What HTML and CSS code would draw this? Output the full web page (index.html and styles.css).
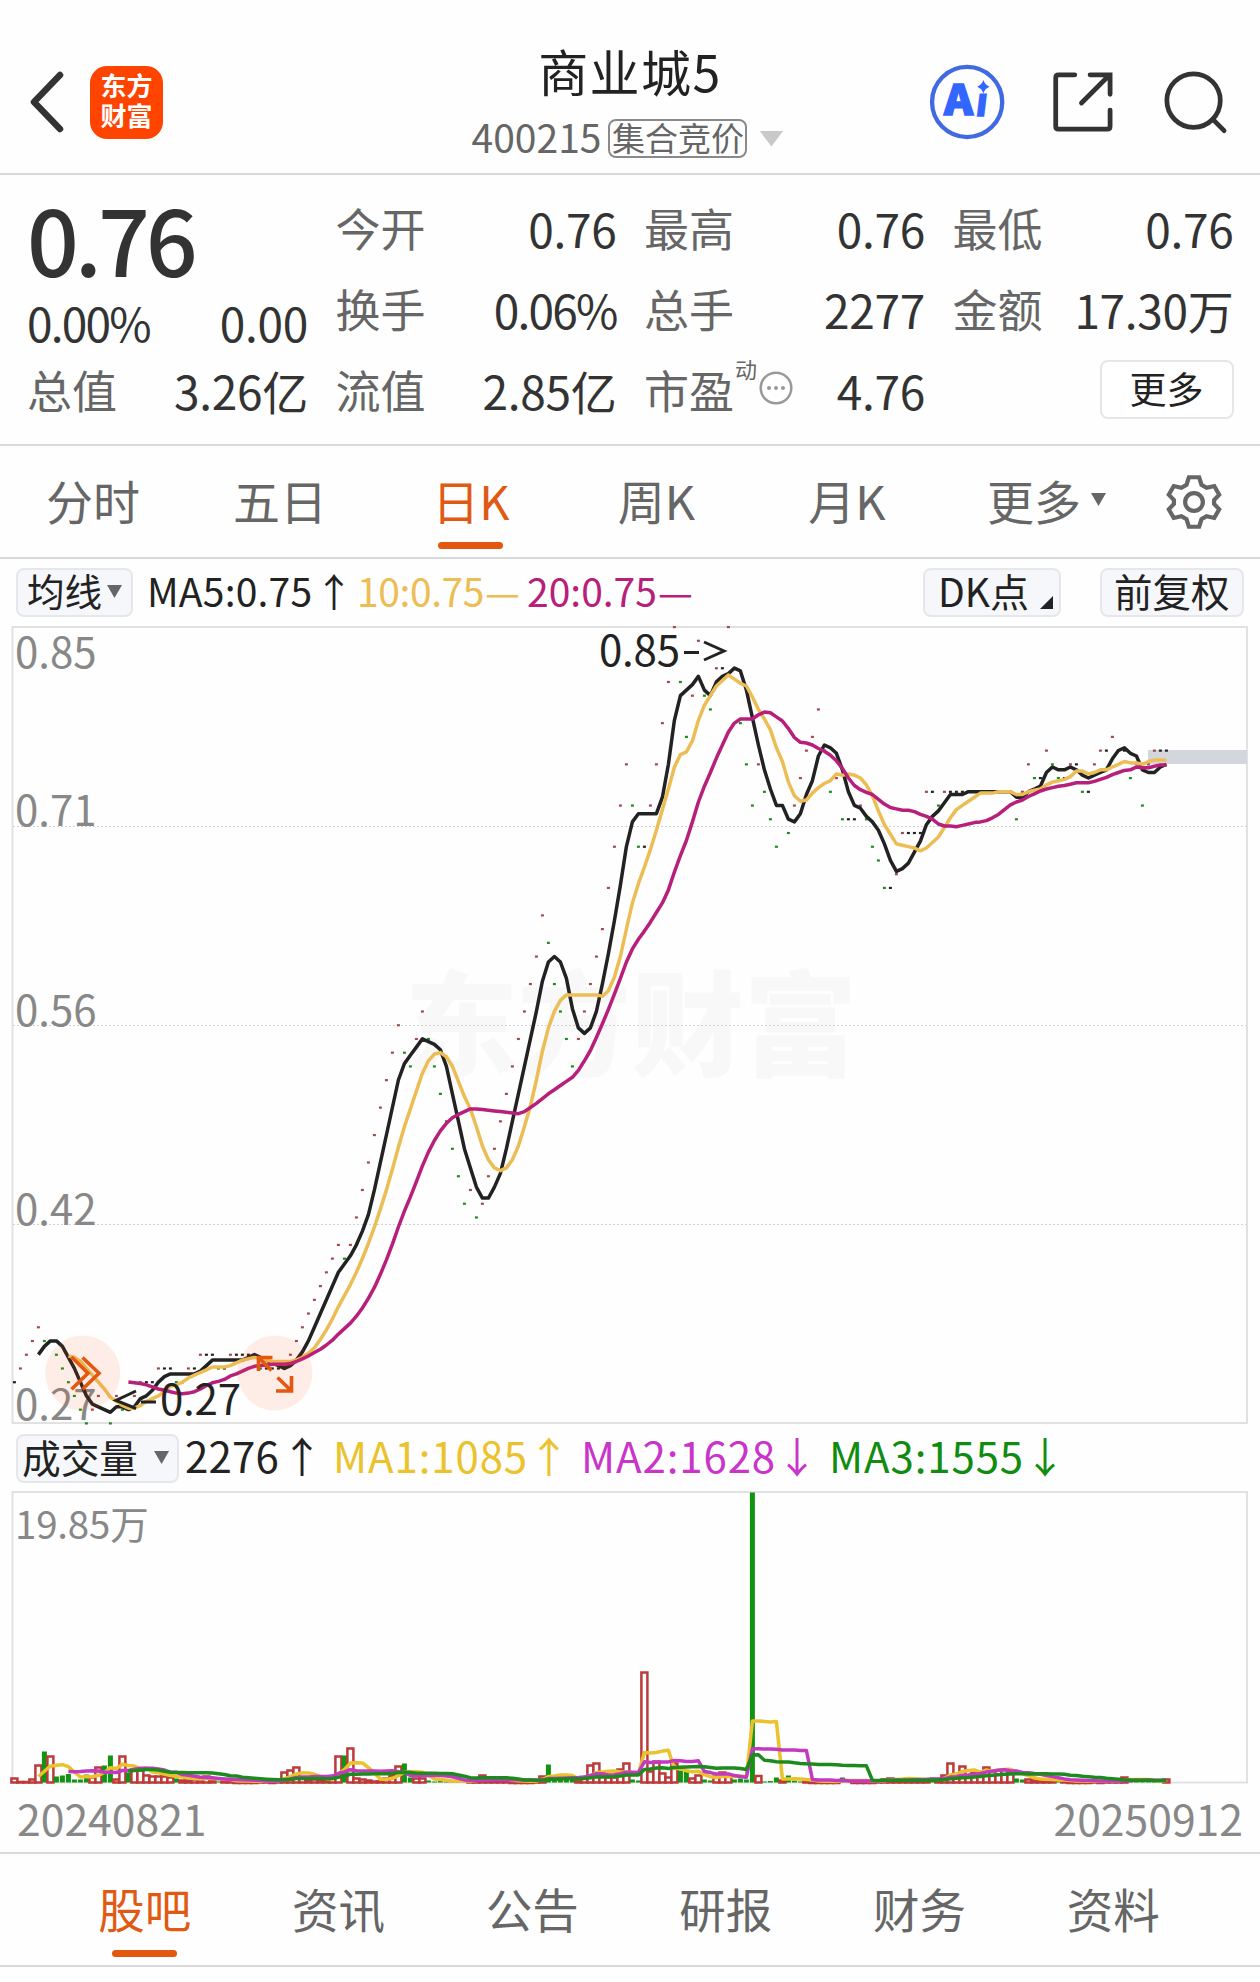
FILE: index.html
```
<!DOCTYPE html>
<html lang="zh-CN">
<head>
<meta charset="utf-8">
<title>商业城5 400215</title>
<link rel="stylesheet" href="styles.css">
</head>
<body>
<header class="topbar">
  <div class="topbar-left">
    <svg class="back" width="36" height="66" viewBox="0 0 36 66"><path d="M31 6 5 33 31 60"/></svg>
    <div class="logo"><span>东方</span><span>财富</span></div>
  </div>
  <div class="title">
    <h1>商业城5</h1>
    <div class="subtitle"><span class="code">400215</span><span class="badge">集合竞价</span><i class="tri tri-light"></i></div>
  </div>
  <div class="topbar-right">
    <svg width="80" height="80" viewBox="925 62 80 80">
      <circle class="ai-ring" cx="965" cy="102" r="36.800"/>
      <text class="ai-text" x="941" y="115.500" textLength="30" lengthAdjust="spacingAndGlyphs">A</text>
      <text class="ai-text ai-i" transform="translate(973 117) skewX(-7)">ı</text>
      <path class="ai-star" d="M982 79q1.500 5 6.500 7-5 2-6.500 7-1.500-5-6.500-7 5-2 6.500-7z"/>
    </svg>
    <svg class="line-icon" width="68" height="68" viewBox="1048 68 68 68"><path d="M1074 73.500h-17q-3 0-3 3v51q0 3 3 3h51q3 0 3-3v-17M1090 73.500h21V94M1109 75l-28 28"/></svg>
    <svg class="line-icon search" width="68" height="70" viewBox="1162 66 68 70"><circle cx="1193" cy="99.500" r="28"/><path d="M1213 119l12 12"/></svg>
  </div>
</header>

<section class="quote">
  <div class="col">
    <strong class="price">0.76</strong>
    <div class="row change"><span class="v">0.00%</span><span class="v">0.00</span></div>
    <div class="row"><span class="k">总值</span><span class="v">3.26亿</span></div>
  </div>
  <div class="col">
    <div class="row"><span class="k">今开</span><span class="v">0.76</span></div>
    <div class="row"><span class="k">换手</span><span class="v pct">0.06%</span></div>
    <div class="row"><span class="k">流值</span><span class="v">2.85亿</span></div>
  </div>
  <div class="col">
    <div class="row"><span class="k">最高</span><span class="v">0.76</span></div>
    <div class="row"><span class="k">总手</span><span class="v">2277</span></div>
    <div class="row"><span class="k">市盈<sup>动</sup><svg class="info" width="34" height="34" viewBox="0 0 34 34"><circle class="ring" cx="17" cy="17" r="15.300"/><circle cx="10" cy="17" r="2"/><circle cx="17" cy="17" r="2"/><circle cx="24" cy="17" r="2"/></svg></span><span class="v">4.76</span></div>
  </div>
  <div class="col">
    <div class="row"><span class="k">最低</span><span class="v">0.76</span></div>
    <div class="row"><span class="k">金额</span><span class="v">17.30万</span></div>
    <div class="row row-end"><button class="more">更多</button></div>
  </div>
</section>

<nav class="periods">
  <span>分时</span><span>五日</span><span class="active">日K</span><span>周K</span><span>月K</span>
  <span class="with-tri">更多<i class="tri tri-small"></i></span>
  <svg class="gear" width="56" height="58" viewBox="-30 -31 60 62"><path d="M-5.500-26.500h11l2.500 8 5.500 3.200 8.200-1.800 5.300 9.300-5.500 5.800v4l5.500 5.800-5.300 9.300-8.200-1.800-5.500 3.200-2.500 8h-11l-2.500-8-5.500-3.200-8.200 1.800-5.300-9.300 5.500-5.800v-4l-5.500-5.800 5.300-9.300 8.200 1.800 5.500-3.200z"/><circle r="9.500"/></svg>
</nav>

<div class="indicators">
  <span class="chip chip-ma">均线<i class="tri tri-small"></i></span>
  <span class="ma5">MA5:0.75</span><span class="arrow">↑</span>
  <span class="ma10">10:0.75</span><span class="dash ma10">—</span>
  <span class="ma20">20:0.75</span><span class="dash ma20">—</span>
  <span class="chip chip-dk">DK点<i class="corner"></i></span>
  <span class="chip chip-fq">前复权</span>
</div>

<svg class="kline" width="1260" height="808" viewBox="0 620 1260 808">
  <text class="watermark" x="405" y="1067" textLength="452" lengthAdjust="spacingAndGlyphs">东方财富</text>
  <path class="frame" d="M12.500 627V1423H1247V627z"/>
  <path class="grid" d="M13 826.500H1246M13 1025.500H1246M13 1224.500H1246"/>
  <rect class="last-price" x="1148" y="750" width="99" height="14"/>
  <g class="axis">
    <text x="15" y="668">0.85</text>
    <text x="15" y="826">0.71</text>
    <text x="15" y="1026">0.56</text>
    <text x="15" y="1225">0.42</text>
    <text x="15" y="1419.500">0.27</text>
  </g>
  <g id="kline-data"></g>
  <g class="marks">
    <text x="599" y="666" textLength="81">0.85</text><path d="M684 652.500h15M704 642l20 9-20 9"/>
    <text x="160" y="1414.500" textLength="81">0.27</text><path d="M156 1402h-15M136 1391l-20 9.500 20 8"/>
  </g>
  <g class="handles">
    <circle cx="82.700" cy="1373" r="37.500"/><circle cx="275" cy="1373" r="37.500"/>
    <path d="M71.500 1357l16.500 16.200-16.500 16M82.500 1357.500l16.500 15.700-16.500 16M272.500 1357.500H258.500V1371M258.500 1357.500l13 13M276 1391h15.500v-15M291 1390.500l-13.500-13"/>
  </g>
</svg>

<div class="indicators vol">
  <span class="chip chip-vol">成交量<i class="tri tri-small"></i></span>
  <span class="v0">2276</span><span class="arrow">↑</span>
  <span class="v1">MA1:1085</span><span class="arrow v1">↑</span>
  <span class="v2">MA2:1628</span><span class="arrow v2">↓</span>
  <span class="v3">MA3:1555</span><span class="arrow v3">↓</span>
</div>

<svg class="volume" width="1260" height="296" viewBox="0 1490 1260 296">
  <path class="frame" d="M12.500 1492V1782.500H1247V1492z"/>
  <g class="axis"><text x="15" y="1539" class="vol-max">19.85万</text></g>
  <g id="volume-data"></g>
</svg>

<div class="dates"><span>20240821</span><span>20250912</span></div>

<nav class="tabs">
  <span class="active">股吧</span><span>资讯</span><span>公告</span><span>研报</span><span>财务</span><span>资料</span>
</nav>
<script src="chart.js"></script>
</body>
</html>
```
FILE: styles.css
```
* { box-sizing: border-box; }
body {
  margin: 0;
  width: 1260px;
  height: 1982px;
  overflow: hidden;
  background: #fefefe;
  color: #333;
  font-family: "Noto Sans CJK SC", sans-serif;
}
.topbar {
  height: 175px;
  padding: 28px 31px 0 29px;
  border-bottom: 2px solid #d9d9d9;
  display: grid;
  grid-template-columns: 300px 1fr 300px;
}
.topbar-left { display: flex; align-items: center; gap: 25px; height: 148px; }
.back path { fill: none; stroke: #333; stroke-width: 6.500; stroke-linecap: round; stroke-linejoin: round; }
.logo {
  width: 73px; height: 73px; padding-bottom: 4px; border-radius: 17px; background: #ff4400; color: #fff;
  display: flex; flex-direction: column; align-items: center; justify-content: center;
  font-size: 26px; font-weight: 700; line-height: 30px;
}
.title { display: flex; flex-direction: column; align-items: center; }
h1 { margin: 5px 0 0 2px; font-size: 50px; font-weight: 400; line-height: 75px; letter-spacing: 1.500px; color: #222; }
.subtitle { display: flex; align-items: center; height: 39px; margin: 11px 0 0 -3px; color: #666; }
.code { font-size: 39px; line-height: 39px; padding-bottom: 4px; }
.badge {
  width: 139px; height: 39px; margin-left: 7px; border: 2px solid #8a8a8a; border-radius: 8px;
  font-size: 33px; line-height: 32px; text-align: center; white-space: nowrap;
}
.tri { display: block; width: 15px; height: 13px; background: #666; clip-path: polygon(0 0, 100% 0, 50% 100%); }
.tri-light { width: 24px; height: 16px; margin-left: 12px; background: #c9c9c9; }
.topbar-right { display: flex; align-items: center; justify-content: flex-end; height: 148px; gap: 45px; }
.search { margin-left: 4px; }
.ai-ring { fill: none; stroke: #4169e1; stroke-width: 4.500; }
.ai-text { font-size: 43px; font-weight: 900; fill: #3366ff; stroke: #3366ff; stroke-width: 1.800; }
.ai-star { fill: #3366ff; }
.line-icon { fill: none; stroke: #333; stroke-width: 5; stroke-linecap: round; }

.quote {
  height: 271px; padding: 12px 27px 0; border-bottom: 2px solid #d9d9d9;
  display: grid; grid-template-columns: repeat(4, 281px); gap: 27.500px;
}
.row { height: 81px; display: flex; align-items: center; justify-content: space-between; line-height: 72px; white-space: nowrap; }
.k { font-size: 45px; color: #666; display: flex; }
.v { font-size: 46px; letter-spacing: -0.300px; }
.v.pct, .change .v:first-child { letter-spacing: -1.800px; }
.price { display: block; height: 101px; font-size: 91px; font-weight: 500; line-height: 101px; letter-spacing: -4px; }
.change { height: 68px; margin-bottom: -7px; }
.k sup { font-size: 22px; line-height: 28px; height: 28px; margin-left: 1px; }
.info { margin: 17px 0 0 2px; fill: #999; }
.info .ring { fill: none; stroke: #999; stroke-width: 2.500; }
.row-end { justify-content: flex-end; }
.more {
  width: 134px; height: 59px; margin-bottom: 0; padding: 0 0 4px; border: 2px solid #e6e6e6; border-radius: 8px; background: #fff;
  font: 400 37px/50px "Noto Sans CJK SC", sans-serif; color: #222;
}

.periods {
  height: 113px; border-bottom: 2px solid #d9d9d9; padding-bottom: 4px;
  display: grid; grid-template-columns: 186px 188px 194px 177px 204px 195px 99px;
  align-items: center; justify-items: center; font-size: 47px; line-height: 60px; color: #666;
}
.active { color: #e05a14; position: relative; }
.active::after { content: ""; position: absolute; left: calc(50% - 33px); bottom: -19px; width: 65px; height: 7px; border-radius: 4px; background: #e4570f; }
.with-tri { display: flex; align-items: center; gap: 10px; }
.gear { fill: none; stroke: #666; stroke-width: 4.500; margin-top: 4px; }

.indicators { height: 61px; padding: 9px 16px 0; display: flex; font-size: 39px; line-height: 44px; white-space: nowrap; color: #222; }
.indicators > span { flex: none; }
.chip { display: flex; align-items: center; height: 49px; border: 2px solid #e5e7ea; border-radius: 8px; background: #f6f7fa; font-size: 39px; line-height: 42px; padding-bottom: 6px; color: #222; }
.chip .tri { margin-top: 4px; }
.chip-ma { width: 117px; padding-left: 9px; font-size: 37.500px; gap: 5px; }
.ma5 { letter-spacing: 0.200px; margin-left: 14px; width: 167px; }
.indicators .arrow { width: 40px; text-align: center; letter-spacing: 0; }
.ma10 { color: #edbd55; width: 129px; margin-left: 3px; letter-spacing: -0.400px; }
.ma20 { color: #b71f7b; width: 132px; margin-left: 5px; letter-spacing: 0; }
.indicators .dash { width: 37px; font-size: 39px; margin-left: -1px; letter-spacing: 0; }
.chip-dk { width: 138px; margin-left: 228px; padding-left: 13px; position: relative; }
.corner { position: absolute; right: 6px; bottom: 6px; width: 13px; height: 13px; background: #222; clip-path: polygon(100% 0, 100% 100%, 0 100%); }
.chip-fq { width: 144px; margin-left: 39px; padding-left: 12px; font-size: 38.500px; }
.kline, .volume { display: block; }
.frame { fill: none; stroke: #e1e1e1; stroke-width: 2; }
.grid { stroke: #d2d2d2; stroke-width: 1; stroke-dasharray: 2 2; }
.watermark { font-size: 114px; font-weight: 900; fill: #f8f8f8; }
.last-price { fill: #d3d6dc; }
.axis { font-size: 42px; fill: #888; }
.axis .vol-max { font-size: 38.500px; letter-spacing: -0.200px; }
.marks { font-size: 42px; fill: #222; }
.marks path { fill: none; stroke: #222; stroke-width: 3; }
.handles circle { fill: #ff5a1e; fill-opacity: 0.100; }
.handles path { fill: none; stroke: #e4570f; stroke-width: 3.600; }
.ma { fill: none; stroke-width: 3.500; stroke-linejoin: round; }
.up { fill: #a34a4a; }
.down { fill: #1a8f1a; }
.flat { fill: #222; }
.bar-up { fill: #fff; stroke: #bd3a3a; stroke-width: 2.500; }
.bar-down { fill: #129312; }

.vol { height: 62px; padding: 6px 16px 0; font-size: 42px; line-height: 42px; }
.chip-vol { width: 163px; padding-left: 4px; font-size: 38.700px; gap: 16px; }
.v0 { width: 96px; margin-left: 6px; letter-spacing: 0.200px; }
.v1, .v2, .v3 { width: 195px; letter-spacing: 0.900px; }
.v1 { color: #ebc22c; margin-left: 12px; }
.v2 { color: #c935c9; margin-left: 13px; }
.v3 { color: #118c11; margin-left: 13px; }
.indicators.vol .arrow { width: 40px; margin-left: 0; }

.dates { height: 68px; padding: 1px 17px 0; display: flex; justify-content: space-between; font-size: 42.700px; line-height: 60px; color: #888; border-bottom: 2px solid #d9d9d9; }
.tabs {
  height: 113px; padding: 0 50px 4px 48px; border-bottom: 2px solid #d9d9d9;
  display: grid; grid-template-columns: repeat(6, 1fr); align-items: center; justify-items: center;
  font-size: 46.500px; line-height: 60px; color: #666;
}
```
FILE: chart.js
```
// Daily closes in cents, one per trading day.
const closes = [
  30,31,32,33,34,33,33,32,31,30,29,28,27,28,29,28,27,29,28,28,29,30,30,30,31,31,31,30,30,31,31,32,32,32,31,31,32,32,32,32,
  32,31,31,31,31,31,32,33,34,35,36,37,38,39,40,39,40,42,44,46,48,50,52,54,56,54,53,55,57,55,53,51,49,47,45,43,44,42,43,45,
  47,49,51,53,55,57,59,61,64,62,59,57,55,53,55,57,59,61,63,66,69,72,75,72,69,69,72,75,78,81,85,81,77,80,84,80,79,82,82,85,
  82,78,75,72,75,73,71,69,72,70,72,74,76,77,79,76,73,74,71,71,71,72,71,69,68,66,66,67,70,70,70,70,73,73,72,73,73,73,73,73,
  73,73,73,73,73,73,73,71,73,75,74,74,76,75,74,74,75,75,73,73,75,76,76,77,76,76,74,75,72,75,76,76,76
];
// Bar heights; negative values are down days.
const volumes = [
  5,1.5,1.5,4,18,-31,27,-6,-7,-8.5,-3,-3,-8,6,16,-17,-27,4,27,-10,14,13,8,7,7,7,6,-4,3,3,4,3,7,3,-1,2,2,1,1,1,
  1,2,2,1,2,11,13,16,5,3,4,3,3,5,27,-27,35,5,4,3,2,2,5,8,17,-19,-5,5,5,-2,-1,-2,-1,-1,-2,-2,2,3,8,3,
  3,2,2,1,1,1,1,3,7,-18,-4,-5,-4,-4,3,5,18,20,7,6,6,14,20,-3,-2,111,12,22,10,6,20,-12,-11,5,8,-3,-2,7,11,7,
  -3,-4,-3,-290,7.5,-1,-1.5,-5,3,-7,-2,-1,2,1,1,1,1,1,-5,-2,1,1,1,1,2,4,5,3,3,5,3,2,2,-5,3,8,20,7,17,8,
  11,9,16,13,13,14,10,-4,-3,4,3,3,3,2,-2,2,1,1,1,1,2,1,2,2,2,6,-3,-2,-2,-2,-1,-1,4
];
const x = i => 14.4 + 6 * i;
const py = c => 1423.3 - (c - 27) * 13.73;
const vy = v => 1782.5 - v;

function average(data, n, y) {
  const points = [];
  for (let i = n - 1; i < data.length; i++) {
    let sum = 0;
    for (let j = 0; j < n; j++) sum += Math.abs(data[i - j]);
    points.push(x(i).toFixed(1) + ',' + y(sum / n).toFixed(1));
  }
  return points.join(' ');
}
const line = (points, color) => `<polyline class="ma" stroke="${color}" points="${points}"/>`;

let k = '';
closes.forEach((c, i) => {
  const prev = i ? closes[i - 1] : c;
  const kind = c > prev ? 'up' : c < prev ? 'down' : 'flat';
  k += `<rect class="${kind}" x="${x(i) - 1.5}" y="${py(c) - 1}" width="3" height="2.200"/>`;
});
k += line(average(closes, 5, py), '#222') + line(average(closes, 10, py), '#edbd55') + line(average(closes, 20, py), '#b71f7b');
document.getElementById('kline-data').innerHTML = k;

let v = '';
volumes.forEach((h, i) => {
  v += h < 0
    ? `<rect class="bar-down" x="${x(i) - 2.5}" y="${vy(-h)}" width="5" height="${-h}"/>`
    : `<rect class="bar-up" x="${x(i) - 3}" y="${vy(h) + 1}" width="6" height="${Math.max(h - 1, 0.500)}"/>`;
});
v += line(average(volumes, 5, vy), '#ebc22c') + line(average(volumes, 10, vy), '#c13ac1') + line(average(volumes, 20, vy), '#1c8a1c');
document.getElementById('volume-data').innerHTML = v;
```
